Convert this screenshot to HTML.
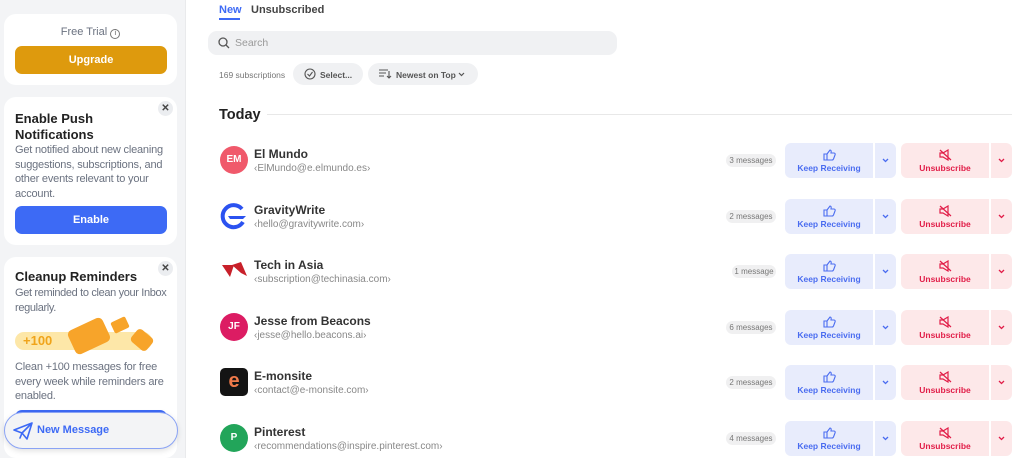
<!DOCTYPE html>
<html><head><meta charset="utf-8"><style>
*{box-sizing:border-box;margin:0;padding:0}
body{width:1024px;height:458px;overflow:hidden;background:#fff;font-family:"Liberation Sans",sans-serif;position:relative}
.a{position:absolute}
#side{left:0;top:0;width:186px;height:458px;background:#f3f4f6;border-right:1px solid #e9eaec}
.card{position:absolute;left:4px;width:173px;background:#fff;border-radius:12px}
.t{font-size:12px;color:#6b7280;line-height:15px}
.h{font-size:13px;font-weight:bold;color:#222;line-height:15.5px}
.btn{position:absolute;left:11px;width:152px;height:28px;border-radius:7px;color:#fff;font-size:11px;font-weight:bold;text-align:center;line-height:28px}
.x{position:absolute;right:4px;width:15px;height:15px;border-radius:50%;background:#ebedf0;font-size:10px;color:#444;text-align:center;line-height:15px;font-weight:bold}
.name{font-size:12px;color:#333;font-weight:bold}
.em{font-size:10px;color:#888}
.av{width:28px;height:28px;border-radius:50%;color:#fff;font-size:10px;font-weight:bold;text-align:center;line-height:28px}
.pill{height:13px;border-radius:7px;background:#f0f0f1;color:#777;font-size:8px;line-height:13px;text-align:center}
.kr{width:88px;height:35px;background:#e8ecfc;border-radius:6px 0 0 6px;color:#4a6cf0;font-size:8.5px;font-weight:bold;text-align:center}
.krc{width:21px;height:35px;background:#e8ecfc;border-radius:0 6px 6px 0}
.un{width:88px;height:35px;background:#fde8e9;border-radius:6px 0 0 6px;color:#e11d48;font-size:8.5px;font-weight:bold;text-align:center}
.unc{width:21px;height:35px;background:#fde8e9;border-radius:0 6px 6px 0}
.ic{display:block;margin:6px auto 2px}
.st{position:absolute;left:11px;width:162px;font-size:11px;line-height:14.5px;color:#6b7280;letter-spacing:-0.2px}
</style></head><body>
<div class="a" id="side">
 <div class="card" style="top:14px;height:71px">
  <div class="t" style="position:absolute;top:11px;width:100%;text-align:center;font-size:11px">Free Trial <span style="display:inline-block;width:10px;height:10px;border:1px solid #777;border-radius:50%;font-size:7px;line-height:8px;color:#555">i</span></div>
  <div class="btn" style="top:32px;background:#de9a0d">Upgrade</div>
 </div>
 <div class="card" style="top:97px;height:148px">
  <div class="x" style="top:4px">✕</div>
  <div class="h" style="position:absolute;left:11px;top:14px">Enable Push<br>Notifications</div>
  <div class="st" style="top:46px">Get notified about new cleaning suggestions, subscriptions, and other events relevant to your account.</div>
  <div class="btn" style="top:109px;background:#3d6af5">Enable</div>
 </div>
 <div class="card" style="top:257px;height:201px">
  <div class="x" style="top:4px">✕</div>
  <div class="h" style="position:absolute;left:11px;top:12px">Cleanup Reminders</div>
  <div class="st" style="top:29px;letter-spacing:-0.35px">Get reminded to clean your Inbox regularly.</div>
  <div style="position:absolute;left:11px;top:75px;width:137px;height:18px;background:#fde7a8;border-radius:9px;color:#f0a41a;font-weight:bold;font-size:13px;line-height:18px;padding-left:8px">+100</div>
  <div style="position:absolute;left:66px;top:66px;width:38px;height:26px;background:#f7a42a;border-radius:5px;transform:rotate(-25deg)"></div>
  <div style="position:absolute;left:108px;top:62px;width:16px;height:12px;background:#f7a42a;border-radius:2px;transform:rotate(-25deg)"></div>
  <div style="position:absolute;left:128px;top:75px;width:20px;height:16px;background:#f7a42a;border-radius:4px;transform:rotate(40deg)"></div>
  <div class="st" style="top:103px">Clean +100 messages for free every week while reminders are enabled.</div>
  <div style="position:absolute;left:11px;top:153px;width:152px;height:10px;background:#3d6af5;border-radius:7px 7px 0 0"></div>
 </div>
 <div class="a" style="left:4px;top:412px;width:174px;height:37px;border-radius:19px;background:#f3f4f6;border:1px solid #8aa3f5;box-shadow:0 2px 6px rgba(0,0,0,.12)">
  <svg class="a" style="left:8px;top:9px" width="20" height="18" viewBox="0 0 20 18"><path d="M1 8 L19 1 L14 17 L9 11 Z M9 11 L19 1 M9 11 L7 16 L9 11" fill="none" stroke="#3d6af5" stroke-width="1.6" stroke-linejoin="round"/></svg>
  <div class="a" style="left:32px;top:11px;font-size:11px;color:#3d6af5;font-weight:bold">New Message</div>
 </div>
</div>

<div class="a" style="left:219px;top:4px;font-size:11px;color:#3d6af5;font-weight:bold">New</div>
<div class="a" style="left:219px;top:18px;width:21px;height:2px;background:#3d6af5"></div>
<div class="a" style="left:251px;top:4px;font-size:11px;color:#444;font-weight:bold">Unsubscribed</div>
<div class="a" style="left:208px;top:31px;width:409px;height:24px;background:#f0f1f3;border-radius:9px"></div>
<svg class="a" style="left:218px;top:37px" width="12" height="12" viewBox="0 0 12 12"><circle cx="5" cy="5" r="4" fill="none" stroke="#555" stroke-width="1.3"/><path d="M8 8L11 11" stroke="#555" stroke-width="1.3"/></svg>
<div class="a" style="left:235px;top:37px;font-size:10.5px;color:#999">Search</div>
<div class="a" style="left:219px;top:70px;font-size:8.5px;color:#777">169 subscriptions</div>
<div class="a" style="left:293px;top:63px;width:70px;height:22px;background:#f0f1f3;border-radius:11px"></div>
<svg class="a" style="left:304px;top:68px" width="12" height="12"><circle cx="6" cy="6" r="5" fill="none" stroke="#555" stroke-width="1.1"/><path d="M3.5 6l2 2 3-4" fill="none" stroke="#555" stroke-width="1.1"/></svg>
<div class="a" style="left:320px;top:70px;font-size:8.5px;color:#555;font-weight:bold">Select...</div>
<div class="a" style="left:368px;top:63px;width:110px;height:22px;background:#f0f1f3;border-radius:11px"></div>
<svg class="a" style="left:379px;top:69px" width="13" height="10"><path d="M0 1h9M0 4h7M0 7h5M10 2v7M8 7l2 2 2-2" fill="none" stroke="#555" stroke-width="1.1"/></svg>
<div class="a" style="left:396px;top:70px;font-size:8.5px;color:#555;font-weight:bold">Newest on Top</div>
<svg class="a" style="left:458px;top:72px" width="7" height="5"><path d="M1 1l2.5 2.5L6 1" fill="none" stroke="#555" stroke-width="1.2"/></svg>
<div class="a" style="left:219px;top:107px;font-size:14.5px;color:#222;font-weight:bold">Today</div>
<div class="a" style="left:267px;top:114px;width:745px;height:1px;background:#e8e8e8"></div>

<div id="rows"></div>
<script>
var rows=[
["El Mundo","‹ElMundo@e.elmundo.es›","3 messages",160,'<div class="av" style="background:#f0596b">EM</div>'],
["GravityWrite","‹hello@gravitywrite.com›","2 messages",216,'<svg width="28" height="28" viewBox="0 0 28 28"><path d="M22 7A11 11 0 1 0 23 20" fill="none" stroke="#2b52f0" stroke-width="4"/><path d="M8 14h18l-3 3H10z" fill="#2b52f0"/></svg>'],
["Tech in Asia","‹subscription@techinasia.com›","1 message",271,'<svg width="28" height="28" viewBox="0 0 28 28"><path d="M2 8h12l-4 12zM12 8l9-3 6 14-6-3z" fill="#c8202a"/></svg>'],
["Jesse from Beacons","‹jesse@hello.beacons.ai›","6 messages",327,'<div class="av" style="background:#dc1c63">JF</div>'],
["E-monsite","‹contact@e-monsite.com›","2 messages",382,'<div class="av" style="background:#141414;border-radius:5px;color:#f07a4a;font-size:20px;line-height:26px">e</div>'],
["Pinterest","‹recommendations@inspire.pinterest.com›","4 messages",438,'<div class="av" style="background:#22a55a">P</div>']];
var h='';
var up='<svg class="ic" width="13" height="12" viewBox="0 0 13 12"><path d="M1 5h3v6H1zM4 5l3-4c1 0 1.5 1 1 3h3c1 0 1.5 1 1 2l-1.5 4c-.3.7-.8 1-1.5 1H4" fill="none" stroke="#4a6cf0" stroke-width="1.1"/></svg>';
var mu='<svg class="ic" width="13" height="12" viewBox="0 0 13 12"><path d="M1 4h3l5-3v10L4 8H1zM1 1l11 10" fill="none" stroke="#e11d48" stroke-width="1.2"/></svg>';
function chev(c){return '<svg style="position:absolute;left:7px;top:15px" width="7" height="5"><path d="M1 1l2.5 2.5L6 1" fill="none" stroke="'+c+'" stroke-width="1.3"/></svg>';}
rows.forEach(function(r){var c=r[3];
h+='<div class="a" style="left:220px;top:'+(c-14)+'px">'+r[4]+'</div>';
h+='<div class="a name" style="left:254px;top:'+(c-13)+'px">'+r[0]+'</div>';
h+='<div class="a em" style="left:254px;top:'+(c+3)+'px">'+r[1]+'</div>';
var w=r[2].length>9?50:44;
h+='<div class="a pill" style="left:'+(776-w)+'px;width:'+w+'px;top:'+(c-6)+'px">'+r[2]+'</div>';
h+='<div class="a kr" style="left:785px;top:'+(c-17)+'px">'+up+'Keep Receiving</div>';
h+='<div class="a krc" style="left:875px;top:'+(c-17)+'px">'+chev('#4a6cf0')+'</div>';
h+='<div class="a un" style="left:901px;top:'+(c-17)+'px">'+mu+'Unsubscribe</div>';
h+='<div class="a unc" style="left:991px;top:'+(c-17)+'px">'+chev('#e11d48')+'</div>';
});
document.getElementById('rows').innerHTML=h;
</script>
</body></html>
